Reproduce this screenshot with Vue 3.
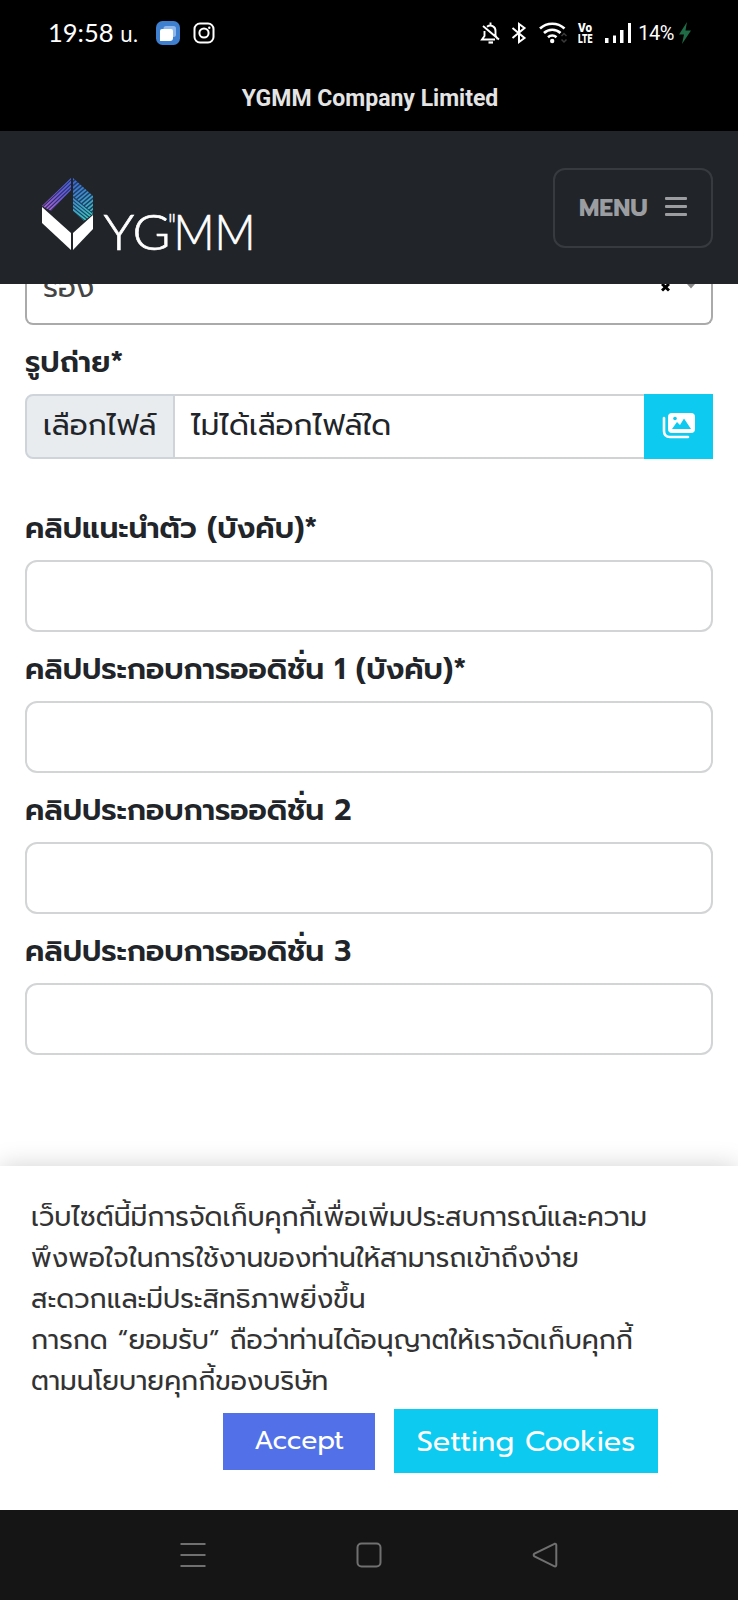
<script setup>
const clips = [
  'คลิปแนะนำตัว (บังคับ)*',
  'คลิปประกอบการออดิชั่น 1 (บังคับ)*',
  'คลิปประกอบการออดิชั่น 2',
  'คลิปประกอบการออดิชั่น 3',
]

const cookieLines = [
  'เว็บไซต์นี้มีการจัดเก็บคุกกี้เพื่อเพิ่มประสบการณ์และความ',
  'พึงพอใจในการใช้งานของท่านให้สามารถเข้าถึงง่าย',
  'สะดวกและมีประสิทธิภาพยิ่งขึ้น',
  'การกด “ยอมรับ” ถือว่าท่านได้อนุญาตให้เราจัดเก็บคุกกี้',
  'ตามนโยบายคุกกี้ของบริษัท',
]

// diagonal stripes of the logo, shifted copies of one line
const stripes = [0, 1, 2, 3, 4, 5, 6, 7, 8, 9, 10, 11, 12]
</script>

<template>
  <div class="screen">
    <div class="status">
      <span class="clock">19:58 <small>น.</small></span>
      <svg class="app" width="24" height="24" viewBox="0 0 24 24">
        <rect width="24" height="24" rx="6.500" fill="#3f7fd0" />
        <rect x="7.500" y="5" width="12.500" height="11" rx="2.500" fill="#8fb8ee" />
        <path d="M4 10q0-2 2-2h9q2 0 2 2v7q0 3-3 3H4z" fill="#fff" />
      </svg>
      <svg class="insta" width="22" height="22" viewBox="0 0 22 22" fill="none" stroke="#fff" stroke-width="2">
        <rect x="1.500" y="1.500" width="19" height="19" rx="5.500" />
        <circle cx="11" cy="11" r="4.600" />
        <circle cx="16.300" cy="5.700" r="1.200" fill="#fff" stroke="none" />
      </svg>
      <div class="status-right">
        <svg class="bell" width="20" height="22" viewBox="0 0 20 22" fill="none" stroke="#fff" stroke-width="1.900">
          <path d="M4.500 9v5L2 17.500h13M7 4.700A5.200 5.200 0 0 1 15.500 9v4.500l2 3.500M10.500 3.500V.5M3 4l16 13.500" />
          <path d="M8.500 20.500h4.500" stroke-width="2.200" />
        </svg>
        <svg class="bt" width="16" height="22" viewBox="0 0 16 22" fill="none" stroke="#fff" stroke-width="2">
          <path d="M1.500 6l12 10L8 20V2l5.500 4-12 10" />
        </svg>
        <svg class="wifi" width="28" height="22" viewBox="0 0 28 22" fill="none" stroke="#fff" stroke-width="2.600">
          <path d="M1 6.500a18 18 0 0 1 24.500 0M5 11a12 12 0 0 1 16.500 0M9 15.200a6.500 6.500 0 0 1 8.500 0" />
          <circle cx="13.200" cy="19" r="2.200" fill="#fff" stroke="none" />
          <path d="M22.500 14l2.500-2.500 2.500 2.500M22.500 17.500L25 20l2.500-2.500" stroke="#3a3a3a" stroke-width="1.500" />
        </svg>
        <span class="volte"><b>Vo</b><b>LTE</b></span>
        <svg class="signal" width="28" height="22" viewBox="0 0 28 22" fill="#fff">
          <rect x="1" y="16" width="3.500" height="5" />
          <rect x="9" y="13.500" width="3" height="7.500" />
          <rect x="16" y="8" width="3.500" height="13" />
          <rect x="24" y="1" width="3" height="20" />
        </svg>
        <span class="percent">14%</span>
        <svg class="bolt" width="14" height="24" viewBox="0 0 14 24">
          <path d="M9 1L1 13.500h5L4 23 13 9.500H7.500z" fill="#1f6b45" />
        </svg>
      </div>
    </div>
    <div class="title">YGMM Company Limited</div>

    <header class="navbar">
      <svg class="logo" width="212" height="76" viewBox="0 0 212 76">
        <defs>
          <linearGradient id="lg-left" gradientUnits="userSpaceOnUse" x1="2" y1="34" x2="29" y2="5">
            <stop offset="0" stop-color="#b565c8" />
            <stop offset=".6" stop-color="#6a5bd2" />
            <stop offset="1" stop-color="#4868d8" />
          </linearGradient>
          <linearGradient id="lg-right" gradientUnits="userSpaceOnUse" x1="31" y1="5" x2="51" y2="36">
            <stop offset="0" stop-color="#4468d8" />
            <stop offset="1" stop-color="#3cc4b4" />
          </linearGradient>
          <clipPath id="clip-left"><path d="M0 28L29 0v12L9 33z" /></clipPath>
          <clipPath id="clip-right"><path d="M31 0L51 18v17L31 18z" /></clipPath>
          <clipPath id="clip-low"><path d="M31 19l20 17-9 7-11-10z" /></clipPath>
        </defs>
        <path d="M0 28L29 0v12L9 33z" fill="#34309a" opacity=".6" />
        <path d="M31 0L51 18v18l-9 7-11-10z" fill="#1b4b86" opacity=".7" />
        <g clip-path="url(#clip-left)" stroke="url(#lg-left)" stroke-width="1.700">
          <path v-for="s in stripes" :key="s" :d="`M-4 ${s * 3.8 + 20}l36-34`" />
        </g>
        <g clip-path="url(#clip-right)" stroke="url(#lg-right)" stroke-width="1.700">
          <path v-for="s in stripes" :key="s" :d="`M28 ${s * 4.2 + 4}l26-22`" />
        </g>
        <g clip-path="url(#clip-low)" stroke="url(#lg-right)" stroke-width="1.700">
          <path v-for="s in stripes" :key="s" :d="`M28 ${s * 3.6 + 4}l25 20`" />
        </g>
        <path d="M0 29l29 26v17L0 45z" fill="#fff" />
        <path d="M51 37v14L31 72V55z" fill="#fff" />
        <g class="logo-text">
          <text x="61.500" y="72" textLength="67" lengthAdjust="spacingAndGlyphs">YG</text>
          <text class="quote" x="126" y="60" textLength="8" lengthAdjust="spacingAndGlyphs">"</text>
          <text x="131.500" y="72" textLength="82" lengthAdjust="spacingAndGlyphs">MM</text>
        </g>
      </svg>
      <button class="menu">
        MENU
        <span class="bars"><i></i><i></i><i></i></span>
      </button>
    </header>

    <main class="form">
      <div class="select">
        <span class="select-text">รอง</span>
        <svg class="select-icons" width="36" height="12" viewBox="0 0 36 12">
          <path d="M1 0l7 6.500M8 0L1 6.500" stroke="#000" stroke-width="3" />
          <path d="M26 0h8l-4 4.500z" fill="#888" />
        </svg>
      </div>

      <label class="photo-label">รูปถ่าย*</label>
      <div class="file">
        <span class="file-button">เลือกไฟล์</span>
        <span class="file-name">ไม่ได้เลือกไฟล์ใด</span>
        <span class="file-icon">
          <svg width="34" height="28" viewBox="0 0 34 28">
            <path d="M2 5v13q0 6 6 6h18" fill="none" stroke="#fff" stroke-width="2.600" stroke-linecap="round" />
            <rect x="6" y="0" width="27" height="20" rx="4" fill="#fff" />
            <circle cx="13" cy="5.500" r="1.800" fill="#0dcaf0" />
            <path d="M10 16l5-7 3 3 4-6.500L29 16z" fill="#0dcaf0" />
          </svg>
        </span>
      </div>

      <div v-for="clip in clips" :key="clip" class="field">
        <label>{{ clip }}</label>
        <input type="text" />
      </div>
    </main>

    <section class="cookie">
      <p v-for="line in cookieLines" :key="line">{{ line }}</p>
      <div class="cookie-buttons">
        <button class="accept">Accept</button>
        <button class="setting">Setting Cookies</button>
      </div>
    </section>

    <nav class="android">
      <svg width="26" height="26" viewBox="0 0 26 26"><path d="M.5 2h25M.5 13h25M.5 24h25" /></svg>
      <svg width="26" height="26" viewBox="0 0 26 26"><rect x="1.500" y="1.500" width="23" height="23" rx="4" /></svg>
      <svg width="26" height="26" viewBox="0 0 26 26"><path d="M22.500 1.800L2.500 11.500q-1.700 1.500 0 3l20 9.800q1.800.5 1.800-1.500V3.300q0-2-1.800-1.500z" /></svg>
    </nav>
  </div>
</template>

<style>
body {
  background: #fff;
}
</style>

<style scoped>
* {
  box-sizing: border-box;
}

.screen {
  width: 738px;
  height: 1600px;
  display: flex;
  flex-direction: column;
  overflow: hidden;
  background: #fff;
  color: #212529;
  font-family: Prompt, Kanit, 'Noto Sans Thai', Lato, 'Noto Sans', sans-serif;
}

.status {
  height: 65px;
  flex: none;
  display: flex;
  align-items: center;
  padding: 0 46px 0 48px;
  background: #000;
  color: #fff;
}

.clock {
  width: 108px;
  padding-top: 2px;
  white-space: nowrap;
  font-family: Lato, 'Noto Sans Thai', sans-serif;
  font-size: 25.5px;
}

.clock small {
  font-size: 21px;
}

.insta {
  margin-left: 13px;
}

.status-right {
  flex: 1;
  display: flex;
  align-items: center;
  justify-content: flex-end;
}

.bt {
  margin-left: 11px;
}

.wifi {
  margin-left: 12px;
}

.volte {
  display: flex;
  flex-direction: column;
  width: 16px;
  margin: 0 10px 0 11px;
  font: 700 13.5px/11px Roboto, sans-serif;
}

.volte b {
  transform: scaleX(0.65);
  transform-origin: 0 50%;
}

.volte b:first-child {
  transform: scaleX(0.86);
}

.percent {
  margin: 0 4px 0 6px;
  font: 400 20px Roboto, sans-serif;
  letter-spacing: -0.5px;
}

.title {
  height: 66px;
  flex: none;
  background: #000;
  color: #e4e4e4;
  text-align: center;
  font: 700 23px/68px Roboto, sans-serif;
  padding-left: 2px;
}

.navbar {
  height: 153px;
  flex: none;
  display: flex;
  justify-content: space-between;
  align-items: center;
  padding: 0 25px 0 42px;
  background: #212529;
}

.logo {
  margin-top: 16px;
  overflow: visible;
}

.logo-text {
  fill: #fff;
  stroke: #fff;
  stroke-width: 0.7px;
  font: 300 50px Lato, sans-serif;
}

.quote {
  font-size: 34px;
}

.menu {
  width: 160px;
  height: 80px;
  display: flex;
  align-items: center;
  justify-content: space-between;
  padding: 0 24px;
  border: 2px solid #373b3f;
  border-radius: 12px;
  background: transparent;
  color: #9b9da0;
  font-family: inherit;
  font-size: 24.4px;
  font-weight: 700;
}

.bars {
  width: 22px;
  display: flex;
  flex-direction: column;
  gap: 5px;
  margin-top: -2px;
}

.bars i {
  height: 3px;
  border-radius: 1px;
  background: #9b9da0;
}

.form {
  height: 882px;
  flex: none;
  display: flex;
  flex-direction: column;
  padding: 0 25px;
}

.select {
  height: 41px;
  flex: none;
  display: flex;
  justify-content: space-between;
  padding: 0 14px 0 16px;
  border: 2px solid #aaa;
  border-top: 0;
  border-radius: 0 0 8px 8px;
  color: #444;
  font-size: 29.4px;
  line-height: 40px;
  overflow: hidden;
}

.select-text {
  margin-top: -17px;
}

label {
  display: block;
  height: 40px;
  line-height: 41px;
  font-size: 29.5px;
  font-weight: 600;
  white-space: nowrap;
}

.photo-label {
  margin: 17px 0 12px;
}

.file {
  height: 65px;
  flex: none;
  display: flex;
  margin-bottom: 49px;
  font-size: 29.5px;
  line-height: 59px;
  white-space: nowrap;
}

.file-button {
  width: 150px;
  padding-left: 16px;
  border: 2px solid #ced4da;
  border-radius: 8px 0 0 8px;
  background: #e9ecef;
}

.file-name {
  flex: 1;
  padding-left: 16px;
  border: solid #d0d2d4;
  border-width: 2px 0;
}

.file-icon {
  width: 69px;
  display: flex;
  align-items: center;
  justify-content: center;
  background: #0dcaf0;
}

.field {
  height: 141px;
  flex: none;
}

.field input {
  display: block;
  width: 100%;
  height: 72px;
  margin-top: 12px;
  border: 2px solid #d2d4d6;
  border-radius: 12px;
  background: #fff;
}

.cookie {
  height: 344px;
  flex: none;
  padding: 31px 31px 0;
  background: #fff;
  color: #333;
  box-shadow: 0 0 24px rgba(0, 0, 0, 0.18);
}

.cookie p {
  height: 41px;
  margin: 0;
  font-size: 26.6px;
  line-height: 41px;
  white-space: nowrap;
}

.cookie-buttons {
  display: flex;
  align-items: center;
  gap: 19px;
  margin: 7px 0 0 192px;
}

.cookie-buttons button {
  border: 0;
  color: #fff;
  font-family: inherit;
  white-space: nowrap;
}

.accept {
  width: 152px;
  height: 57px;
  padding: 0 0 3px;
  background: #5271e8;
  font-size: 26.6px;
}

.setting {
  width: 264px;
  height: 64px;
  padding: 0;
  background: #0dcaf0;
  font-size: 28.7px;
}

.android {
  height: 90px;
  flex: none;
  display: flex;
  justify-content: space-between;
  align-items: center;
  padding: 0 180px;
  background: #151515;
}

.android svg {
  fill: none;
  stroke: #707070;
  stroke-width: 2;
}
</style>
